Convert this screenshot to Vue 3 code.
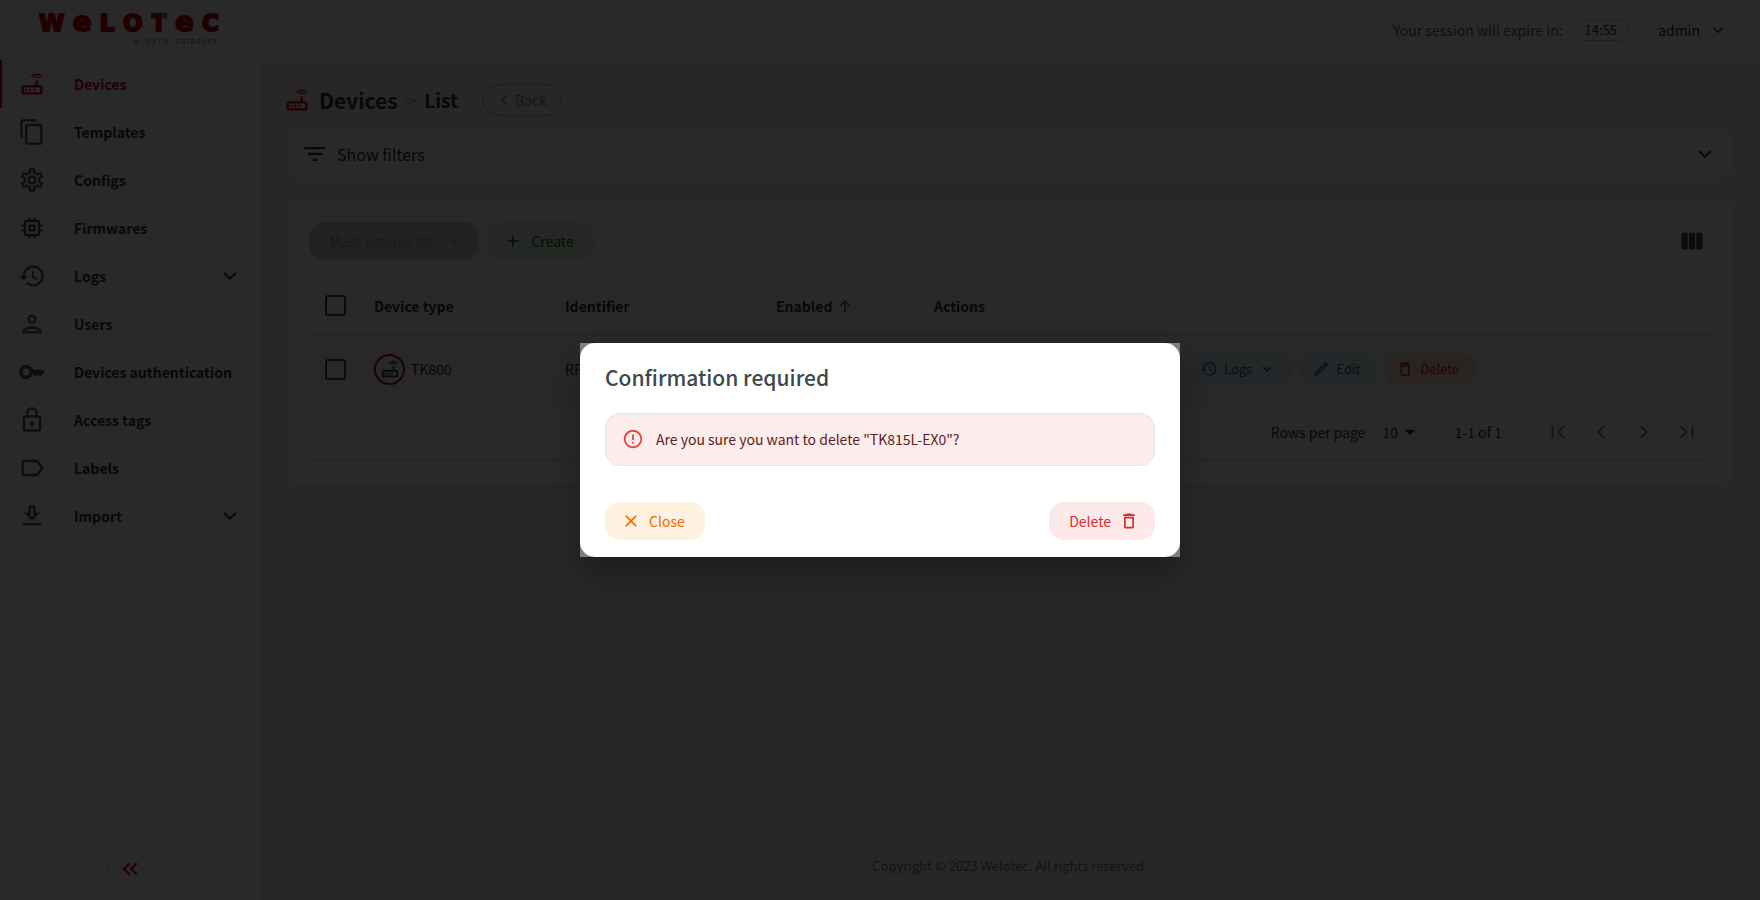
<template>
  <div class="layout">
    <header class="topbar">
      <a class="logo" href="#" aria-label="Welotec">
        <span class="logo-word">
          <span>W</span>
          <span class="small">e</span>
          <span>L</span>
          <span>O</span>
          <span class="split">T</span>
          <span class="small">e</span>
          <span>C</span>
        </span>
        <span class="logo-claim">a byte smarter</span>
      </a>
      <div class="topbar-right">
        <span class="session">Your session will expire in:</span>
        <span class="timer">14:55</span>
        <button class="user" type="button">
          admin
          <svg class="i20" viewBox="0 0 24 24"><path :d="icons.down" /></svg>
        </button>
      </div>
    </header>

    <div class="body">
      <aside class="sidebar">
        <nav>
          <a
            v-for="item in menu"
            :key="item.label"
            href="#"
            class="nav-item"
            :class="{ active: item.label === active }"
            @click.prevent="active = item.label"
          >
            <svg class="i28" viewBox="0 0 24 24"><path :d="icons[item.icon]" /></svg>
            <span class="nav-label">{{ item.label }}</span>
            <svg v-if="item.children" class="i26" viewBox="0 0 24 24"><path :d="icons.down" /></svg>
          </a>
        </nav>
        <button class="collapse" type="button" aria-label="Collapse menu">
          <svg class="i26" viewBox="0 0 24 24"><path :d="icons.doubleLeft" /></svg>
        </button>
      </aside>

      <main class="content">
        <div class="heading">
          <svg class="i28" viewBox="0 0 24 24"><path :d="icons.router" /></svg>
          <h1>Devices</h1>
          <span class="sep">&gt;</span>
          <h2>List</h2>
          <button class="back" type="button">
            <svg class="i18" viewBox="0 0 24 24"><path :d="icons.left" /></svg>
            Back
          </button>
        </div>

        <button class="card filters" type="button">
          <svg class="i28" viewBox="0 0 24 24"><path :d="icons.filter" /></svg>
          <span>Show filters</span>
          <svg class="i26" viewBox="0 0 24 24"><path :d="icons.down" /></svg>
        </button>

        <section class="card list">
          <div class="toolbar">
            <button class="btn disabled" type="button" disabled>
              Mass actions (0)
              <svg class="i20" viewBox="0 0 24 24"><path :d="icons.down" /></svg>
            </button>
            <button class="btn green" type="button">
              <svg class="i20" viewBox="0 0 24 24"><path :d="icons.add" /></svg>
              Create
            </button>
            <button class="columns" type="button" aria-label="Columns">
              <svg class="i28" viewBox="0 0 24 24"><path :d="icons.columns" /></svg>
            </button>
          </div>

          <table>
            <thead>
              <tr>
                <th class="col-check"><input type="checkbox" aria-label="Select all" /></th>
                <th class="col-type">Device type</th>
                <th class="col-id">Identifier</th>
                <th class="col-enabled">
                  <span class="sorted">
                    Enabled
                    <svg class="i18" viewBox="0 0 24 24"><path :d="icons.up" /></svg>
                  </span>
                </th>
                <th>Actions</th>
              </tr>
            </thead>
            <tbody>
              <tr>
                <td><input type="checkbox" aria-label="Select row" /></td>
                <td>
                  <span class="device">
                    <span class="device-icon">
                      <svg class="i22" viewBox="0 0 24 24"><path :d="icons.router" /></svg>
                    </span>
                    TK800
                  </span>
                </td>
                <td>RF</td>
                <td></td>
                <td>
                  <div class="row-actions">
                    <button class="btn small blue" type="button">
                      <svg class="i18" viewBox="0 0 24 24"><path :d="icons.history" /></svg>
                      Logs
                      <svg class="i18" viewBox="0 0 24 24"><path :d="icons.down" /></svg>
                    </button>
                    <button class="btn small blue" type="button">
                      <svg class="i18" viewBox="0 0 24 24"><path :d="icons.edit" /></svg>
                      Edit
                    </button>
                    <button class="btn small red" type="button">
                      <svg class="i18" viewBox="0 0 24 24"><path :d="icons.trash" /></svg>
                      Delete
                    </button>
                  </div>
                </td>
              </tr>
            </tbody>
          </table>

          <div class="pagination">
            <label for="rows">Rows per page</label>
            <span class="rows">
              <select id="rows" v-model="rows">
                <option>10</option>
                <option>25</option>
                <option>50</option>
              </select>
              <svg class="i26" viewBox="0 0 24 24"><path :d="icons.triangle" /></svg>
            </span>
            <span class="range">1-1 of 1</span>
            <div class="pages">
              <button v-for="p in pages" :key="p.icon" type="button" :aria-label="p.label" disabled>
                <svg class="i26" viewBox="0 0 24 24"><path :d="icons[p.icon]" /></svg>
              </button>
            </div>
          </div>
        </section>

        <footer>Copyright © 2023 Welotec. All rights reserved.</footer>
      </main>
    </div>

    <div v-if="open" class="backdrop">
      <div class="dialog" role="dialog" aria-modal="true" aria-labelledby="dialog-title">
        <div class="dialog-paper">
          <h2 id="dialog-title">Confirmation required</h2>
          <div class="alert">
            <svg class="i22" viewBox="0 0 24 24"><path :d="icons.error" /></svg>
            <span>Are you sure you want to delete "TK815L-EX0"?</span>
          </div>
          <div class="dialog-actions">
            <button class="btn orange" type="button" @click="open = false">
              <svg class="i20" viewBox="0 0 24 24"><path :d="icons.close" /></svg>
              Close
            </button>
            <button class="btn rose" type="button" @click="open = false">
              Delete
              <svg class="i20" viewBox="0 0 24 24"><path :d="icons.trash" /></svg>
            </button>
          </div>
        </div>
      </div>
    </div>
  </div>
</template>

<script setup>
import { ref } from 'vue'

const active = ref('Devices')
const rows = ref('10')
const open = ref(true)

const menu = [
  { label: 'Devices', icon: 'router' },
  { label: 'Templates', icon: 'copy' },
  { label: 'Configs', icon: 'settings' },
  { label: 'Firmwares', icon: 'memory' },
  { label: 'Logs', icon: 'history', children: true },
  { label: 'Users', icon: 'person' },
  { label: 'Devices authentication', icon: 'key' },
  { label: 'Access tags', icon: 'lock' },
  { label: 'Labels', icon: 'label' },
  { label: 'Import', icon: 'download', children: true },
]

const pages = [
  { icon: 'first', label: 'First page' },
  { icon: 'left', label: 'Previous page' },
  { icon: 'right', label: 'Next page' },
  { icon: 'last', label: 'Last page' },
]

const icons = {
  router: 'm20.2 5.9.8-.8C19.6 3.7 17.8 3 16 3s-3.6.7-5 2.1l.8.8C13 4.8 14.5 4.2 16 4.2s3 .6 4.2 1.7zm-.9.8c-.9-.9-2.1-1.4-3.3-1.4s-2.4.5-3.3 1.4l.8.8c.7-.7 1.6-1 2.5-1 .9 0 1.8.3 2.5 1l.8-.8zM19 13h-2V9h-2v4H5c-1.1 0-2 .9-2 2v4c0 1.1.9 2 2 2h14c1.1 0 2-.9 2-2v-4c0-1.1-.9-2-2-2zm0 6H5v-4h14v4zM6 16h2v2H6zm3.5 0h2v2h-2zm3.5 0h2v2h-2z',
  copy: 'M16 1H4c-1.1 0-2 .9-2 2v14h2V3h12V1zm3 4H8c-1.1 0-2 .9-2 2v14c0 1.1.9 2 2 2h11c1.1 0 2-.9 2-2V7c0-1.1-.9-2-2-2zm0 16H8V7h11v14z',
  settings: 'M19.43 12.98c.04-.32.07-.64.07-.98s-.03-.66-.07-.98l2.11-1.65c.19-.15.24-.42.12-.64l-2-3.46c-.09-.16-.26-.25-.44-.25-.06 0-.12.01-.17.03l-2.49 1c-.52-.4-1.08-.73-1.69-.98l-.38-2.65C14.46 2.18 14.25 2 14 2h-4c-.25 0-.46.18-.49.42l-.38 2.65c-.61.25-1.17.59-1.69.98l-2.49-1c-.06-.02-.12-.03-.18-.03-.17 0-.34.09-.43.25l-2 3.46c-.13.22-.07.49.12.64l2.11 1.65c-.04.32-.07.65-.07.98s.03.66.07.98l-2.11 1.65c-.19.15-.24.42-.12.64l2 3.46c.09.16.26.25.44.25.06 0 .12-.01.17-.03l2.49-1c.52.4 1.08.73 1.69.98l.38 2.65c.03.24.24.42.49.42h4c.25 0 .46-.18.49-.42l.38-2.65c.61-.25 1.17-.59 1.69-.98l2.49 1c.06.02.12.03.18.03.17 0 .34-.09.43-.25l2-3.46c.12-.22.07-.49-.12-.64l-2.11-1.65zm-1.98-1.71c.04.31.05.52.05.73 0 .21-.02.43-.05.73l-.14 1.13.89.7 1.08.84-.7 1.21-1.27-.51-1.04-.42-.9.68c-.43.32-.84.56-1.25.73l-1.06.43-.16 1.13-.2 1.35h-1.4l-.19-1.35-.16-1.13-1.06-.43c-.43-.18-.83-.41-1.23-.71l-.91-.7-1.06.43-1.27.51-.7-1.21 1.08-.84.89-.7-.14-1.13c-.03-.31-.05-.54-.05-.74s.02-.43.05-.73l.14-1.13-.89-.7-1.08-.84.7-1.21 1.27.51 1.04.42.9-.68c.43-.32.84-.56 1.25-.73l1.06-.43.16-1.13.2-1.35h1.39l.19 1.35.16 1.13 1.06.43c.43.18.83.41 1.23.71l.91.7 1.06-.43 1.27-.51.7 1.21-1.07.85-.89.7.14 1.13zM12 8c-2.21 0-4 1.79-4 4s1.79 4 4 4 4-1.79 4-4-1.79-4-4-4zm0 6c-1.1 0-2-.9-2-2s.9-2 2-2 2 .9 2 2-.9 2-2 2z',
  memory: 'M15 9H9v6h6V9zm-2 4h-2v-2h2v2zm8-2V9h-2V7c0-1.1-.9-2-2-2h-2V3h-2v2h-2V3H9v2H7c-1.1 0-2 .9-2 2v2H3v2h2v2H3v2h2v2c0 1.1.9 2 2 2h2v2h2v-2h2v2h2v-2h2c1.1 0 2-.9 2-2v-2h2v-2h-2v-2h2zm-4 6H7V7h10v10z',
  history: 'M13 3c-4.97 0-9 4.03-9 9H1l3.89 3.89.07.14L9 12H6c0-3.87 3.13-7 7-7s7 3.13 7 7-3.13 7-7 7c-1.93 0-3.68-.79-4.94-2.06l-1.42 1.42C8.27 19.99 10.51 21 13 21c4.97 0 9-4.03 9-9s-4.03-9-9-9zm-1 5v5l4.28 2.54.72-1.21-3.5-2.08V8H12z',
  person: 'M12 6c1.1 0 2 .9 2 2s-.9 2-2 2-2-.9-2-2 .9-2 2-2m0 10c2.7 0 5.8 1.29 6 2H6c.23-.72 3.31-2 6-2m0-12C9.79 4 8 5.79 8 8s1.79 4 4 4 4-1.79 4-4-1.79-4-4-4zm0 10c-2.67 0-8 1.34-8 4v2h16v-2c0-2.66-5.33-4-8-4z',
  key: 'M21 10h-8.35C11.83 7.67 9.61 6 7 6c-3.31 0-6 2.69-6 6s2.69 6 6 6c2.61 0 4.83-1.67 5.65-4H13l2 2 2-2 2 2 4-4.04L21 10zM7 15c-1.65 0-3-1.35-3-3s1.35-3 3-3 3 1.35 3 3-1.35 3-3 3z',
  lock: 'M18 8h-1V6c0-2.76-2.24-5-5-5S7 3.24 7 6v2H6c-1.1 0-2 .9-2 2v10c0 1.1.9 2 2 2h12c1.1 0 2-.9 2-2V10c0-1.1-.9-2-2-2zM9 6c0-1.66 1.34-3 3-3s3 1.34 3 3v2H9V6zm9 14H6V10h12v10zm-6-3c1.1 0 2-.9 2-2s-.9-2-2-2-2 .9-2 2 .9 2 2 2z',
  label: 'M17.63 5.84C17.27 5.33 16.67 5 16 5L5 5.01C3.9 5.01 3 5.9 3 7v10c0 1.1.9 1.99 2 1.99L16 19c.67 0 1.27-.33 1.63-.84L22 12l-4.37-6.16zM16 17H5V7h11l3.55 5L16 17z',
  download: 'M19 9h-4V3H9v6H5l7 7 7-7zm-8 2V5h2v6h1.17L12 13.17 9.83 11H11zm-7 7h16v2H4z',
  down: 'M16.59 8.59 12 13.17 7.41 8.59 6 10l6 6 6-6z',
  left: 'M15.41 7.41 14 6l-6 6 6 6 1.41-1.41L10.83 12z',
  right: 'M10 6 8.59 7.41 13.17 12l-4.58 4.59L10 18l6-6z',
  first: 'M18.41 16.59 13.82 12l4.59-4.59L17 6l-6 6 6 6zM6 6h2v12H6z',
  last: 'M5.59 7.41 10.18 12l-4.59 4.59L7 18l6-6-6-6zM16 6h2v12h-2z',
  doubleLeft: 'M17.59 18 19 16.59 14.42 12 19 7.41 17.59 6l-6 6zM11 18l1.41-1.41L7.83 12l4.58-4.59L11 6l-6 6z',
  filter: 'M10 18h4v-2h-4v2zM3 6v2h18V6H3zm3 7h12v-2H6v2z',
  add: 'M19 13h-6v6h-2v-6H5v-2h6V5h2v6h6v2z',
  columns: 'M14.67 5v14H9.33V5h5.34zm1 14H21V5h-5.33v14zm-7.34 0V5H3v14h5.33z',
  up: 'm4 12 1.41 1.41L11 7.83V20h2V7.83l5.58 5.59L20 12l-8-8-8 8z',
  edit: 'm14.06 9.02.92.92L5.92 19H5v-.92l9.06-9.06M17.66 3c-.25 0-.51.1-.7.29l-1.83 1.83 3.75 3.75 1.83-1.83c.39-.39.39-1.02 0-1.41l-2.34-2.34c-.2-.2-.45-.29-.71-.29zm-3.6 3.19L3 17.25V21h3.75L17.81 9.94l-3.75-3.75z',
  trash: 'M16 9v10H8V9h8m-1.5-6h-5l-1 1H5v2h14V4h-3.5l-1-1zM18 7H6v12c0 1.1.9 2 2 2h8c1.1 0 2-.9 2-2V7z',
  triangle: 'm7 10 5 5 5-5z',
  error: 'M11 15h2v2h-2zm0-8h2v6h-2zm.99-5C6.47 2 2 6.48 2 12s4.47 10 9.99 10C17.52 22 22 17.52 22 12S17.52 2 11.99 2zM12 20c-4.42 0-8-3.58-8-8s3.58-8 8-8 8 3.58 8 8-3.58 8-8 8z',
  close: 'M19 6.41 17.59 5 12 10.59 6.41 5 5 6.41 10.59 12 5 17.59 6.41 19 12 13.41 17.59 19 19 17.59 13.41 12z',
}
</script>

<style>
body {
  margin: 0;
  background: #f1f1f1;
}
</style>

<style scoped>
.layout {
  display: flex;
  flex-direction: column;
  min-height: 100vh;
  box-sizing: border-box;
  font-family: "Noto Sans CJK SC", "Noto Sans", sans-serif;
  font-size: 14px;
  line-height: 20px;
  color: #263238;
}

button,
select {
  font: inherit;
  color: inherit;
  border: none;
  background: none;
  padding: 0;
  cursor: pointer;
}

a {
  color: inherit;
  text-decoration: none;
}

h1,
h2 {
  margin: 0;
}

svg {
  fill: currentColor;
  flex: none;
}

.i18 { width: 18px; height: 18px; }
.i20 { width: 20px; height: 20px; }
.i22 { width: 22px; height: 22px; }
.i26 { width: 26px; height: 26px; }
.i28 { width: 28px; height: 28px; }

/* top bar */
.topbar {
  display: flex;
  justify-content: space-between;
  align-items: flex-start;
  height: 60px;
  box-sizing: border-box;
  padding: 0 32px 0 39px;
  background: #fff;
  border-bottom: 1px solid #dcdcdc;
}

.logo {
  display: flex;
  flex-direction: column;
  width: 180px;
  padding-top: 10px;
  font-family: "DejaVu Sans", sans-serif;
  color: #cc0010;
}

.logo-word {
  display: flex;
  justify-content: space-between;
  align-items: baseline;
  height: 24px;
  line-height: 24px;
  font-size: 23px;
  font-weight: bold;
  -webkit-text-stroke: 2px #cc0010;
}

.logo-word .small {
  font-size: 27px;
}

.logo-word .split {
  background: linear-gradient(90deg, #cc0010 60%, #777 60%);
  background-clip: text;
  color: transparent;
  -webkit-text-stroke: 2px transparent;
}

.logo-claim {
  align-self: flex-end;
  font-family: "Liberation Sans", sans-serif;
  font-size: 9px;
  line-height: 14px;
  letter-spacing: 2px;
  color: #777;
}

.topbar-right {
  display: flex;
  align-items: center;
  height: 59px;
}

.session {
  color: #616161;
}

.timer {
  margin: 0 28px 0 9px;
  padding: 0 12px;
  border: 1px solid #ccc;
  border-radius: 12px;
  font-size: 13px;
}

.user {
  display: flex;
  align-items: center;
  gap: 8px;
}

.body {
  display: flex;
  flex: 1;
}

/* sidebar */
.sidebar {
  display: flex;
  flex-direction: column;
  justify-content: space-between;
  align-items: center;
  flex: 0 0 260px;
  background: #fff;
  padding-bottom: 8px;
}

.sidebar nav {
  align-self: stretch;
}

.nav-item {
  display: flex;
  align-items: center;
  height: 48px;
  box-sizing: border-box;
  padding: 0 17px 0 16px;
  border-left: 2px solid transparent;
  font-weight: 600;
}

.nav-item svg {
  color: #555;
}

.nav-item .i26 {
  color: #263238;
}

.nav-item.active,
.nav-item.active svg {
  color: #cc0010;
}

.nav-item.active {
  border-left-color: #cc0010;
}

.nav-label {
  flex: 1;
  margin-left: 28px;
}

.collapse {
  display: flex;
  align-items: center;
  justify-content: center;
  width: 46px;
  height: 46px;
  border: 1px solid #dcdcdc;
  border-radius: 50%;
  color: #cc0010;
}

/* content */
.content {
  display: flex;
  flex-direction: column;
  flex: 1;
  padding: 24px 25px;
  background: #f1f1f1;
}

.heading {
  display: flex;
  align-items: center;
  height: 32px;
  margin: 0 0 12px -2px;
}

.heading .i28 {
  margin-right: 8px;
  color: #cc0010;
}

.heading h1 {
  font-size: 21px;
  font-weight: 600;
}

.heading h2 {
  font-size: 19px;
  font-weight: 600;
}

.sep {
  margin: 0 8px;
  font-size: 19px;
  color: #aaa;
}

.back {
  display: flex;
  align-items: center;
  gap: 2px;
  height: 32px;
  margin-left: 24px;
  padding: 0 14px 0 12px;
  border: 1px solid #b0b0b0;
  border-radius: 16px;
  color: #8a8a8a;
}

.card {
  background: #fff;
  border: 1px solid #e6e6e6;
  border-radius: 15px;
}

.filters {
  display: flex;
  align-items: center;
  height: 52px;
  margin-bottom: 17px;
  padding: 0 16px 0 15px;
  font-size: 16px;
  text-align: left;
}

.filters span {
  flex: 1;
  margin-left: 8px;
}

.list {
  padding: 24px 23px;
}

.toolbar {
  display: flex;
  align-items: center;
  gap: 8px;
  margin-bottom: 12px;
}

.btn {
  display: flex;
  align-items: center;
  gap: 8px;
  height: 38px;
  padding: 0 20px;
  border-radius: 15px;
}

.btn.disabled {
  gap: 12px;
  padding-right: 15px;
  background: #d0d0d0;
  color: #9a9a9a;
}

.btn.green {
  padding-left: 16px;
  background: #e0f2e0;
  color: #1b5e20;
}

.btn.small {
  gap: 6px;
  height: 32px;
  padding: 0 16px 0 12px;
  font-size: 13px;
}

.btn.blue {
  background: #dceef8;
  color: #0270b0;
}

.btn.red {
  background: #fdd8d5;
  color: #c62828;
}

.btn.rose {
  padding-right: 16px;
  background: #fde9ea;
  color: #d32f2f;
}

.btn.orange {
  padding-left: 16px;
  background: #fff1e0;
  color: #ef6c00;
}

.columns {
  display: flex;
  margin-left: auto;
  margin-right: 5px;
  color: #444;
}

table {
  width: 100%;
  table-layout: fixed;
  border-collapse: collapse;
}

th,
td {
  padding: 0 16px;
  text-align: left;
}

th {
  height: 62px;
  padding-top: 6px;
  box-sizing: border-box;
  border-bottom: 1px solid #d4d4d4;
  font-weight: 600;
}

td {
  height: 70px;
  box-sizing: border-box;
  background: #f4f4f4;
  border-bottom: 1px solid #e6e6e6;
}

.sorted {
  display: flex;
  align-items: center;
  gap: 4px;
}

.sorted svg {
  color: #555;
}

th input,
td input {
  display: block;
  appearance: none;
  width: 21px;
  height: 21px;
  margin: 0;
  border: 2px solid #444;
  border-radius: 3px;
}

.col-check { width: 49px; padding-right: 0; box-sizing: border-box; }
.col-type { width: 191px; box-sizing: border-box; }
.col-id { width: 211px; box-sizing: border-box; }
.col-enabled { width: 158px; box-sizing: border-box; }

.device {
  display: flex;
  align-items: center;
  gap: 6px;
}

.device-icon {
  display: flex;
  align-items: center;
  justify-content: center;
  width: 27px;
  height: 27px;
  border: 2px solid #cc0010;
  border-radius: 50%;
}

.row-actions {
  display: flex;
  gap: 8px;
  padding-left: 254px;
}

.pagination {
  display: flex;
  align-items: center;
  justify-content: flex-end;
  height: 55px;
  padding-right: 11px;
  border-bottom: 1px solid #d4d4d4;
}

.rows {
  display: flex;
  align-items: center;
  margin: 0 32px 0 17px;
}

.rows select {
  appearance: none;
  width: 40px;
  cursor: pointer;
}

.rows svg {
  margin-left: -26px;
  pointer-events: none;
}

.pages {
  display: flex;
  gap: 17px;
  margin-left: 43px;
}

.pages button {
  display: flex;
  color: #8a8a8a;
}

footer {
  margin-top: auto;
  font-size: 13px;
  text-align: center;
  color: #757575;
}

/* dialog */
.backdrop {
  position: fixed;
  inset: 0;
  display: flex;
  align-items: center;
  justify-content: center;
  background: rgba(0, 0, 0, 0.84);
}

.dialog {
  width: 600px;
  background: rgba(255, 255, 255, 0.4);
  box-shadow: 0 11px 15px -7px rgba(0, 0, 0, 0.2), 0 24px 38px 3px rgba(0, 0, 0, 0.14), 0 9px 46px 8px rgba(0, 0, 0, 0.12);
}

.dialog-paper {
  padding: 19px 25px 17px;
  border-radius: 15px;
  background: #fff;
}

.dialog h2 {
  font-size: 21px;
  line-height: 30px;
  font-weight: 500;
  color: #3b494c;
}

.alert {
  display: flex;
  align-items: center;
  gap: 12px;
  height: 49px;
  margin: 21px 0 36px;
  padding: 0 16px 2px;
  border: 1px solid #e8e4e4;
  border-radius: 15px;
  background: #fdecec;
  color: #5f2120;
}

.alert svg {
  color: #e04848;
}

.dialog-actions {
  display: flex;
  justify-content: space-between;
}
</style>
